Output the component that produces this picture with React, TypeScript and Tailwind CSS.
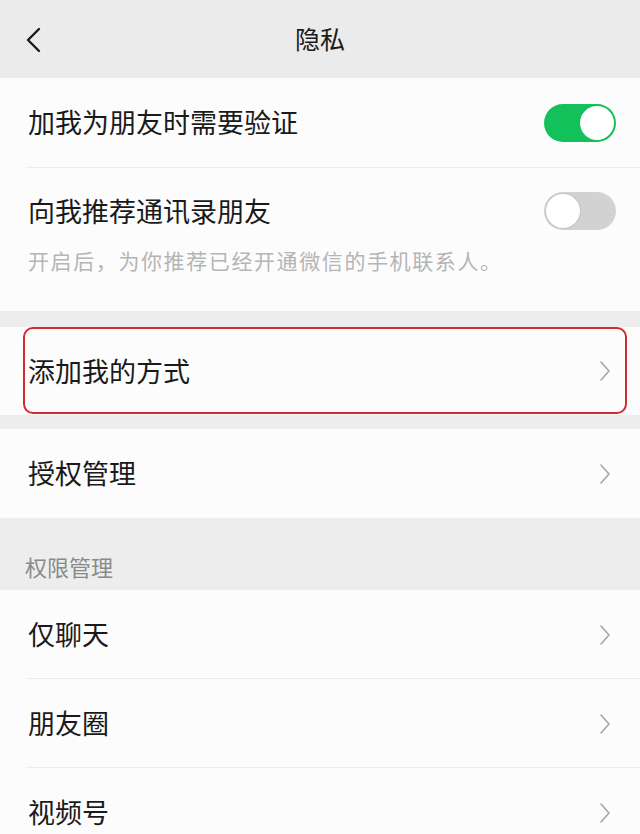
import React from "react";

const font = { fontFamily: '"Noto Sans CJK SC", "Noto Sans", sans-serif' };

const Chevron = () => (
  <svg width="14" height="22" viewBox="0 0 14 22" fill="none">
    <path d="M3 2 L11 11 L3 20" stroke="#a6a6a6" strokeWidth="1.6" strokeLinecap="round" strokeLinejoin="round" />
  </svg>
);

const Toggle = ({ on }: { on: boolean }) => (
  <div
    className={`w-[72px] h-[38px] rounded-full flex items-center p-[2px] ${on ? "bg-[#13c15b] justify-end" : "bg-[#d2d2d2] justify-start"}`}
  >
    <div className={`w-[34px] h-[34px] rounded-full bg-white ${on ? "" : "shadow-[0_0_0_1px_#c4c4c4]"}`}></div>
  </div>
);

const LinkRow = ({ label, divider }: { label: string; divider?: boolean }) => (
  <div className="relative flex items-center justify-between h-[89px] pl-[28px] pr-[28px] bg-[#fcfcfc]">
    <span className="text-[27px] text-[#1a1a1a]">{label}</span>
    <Chevron />
    {divider && <div className="absolute bottom-0 left-[26px] right-0 h-px bg-[#ececec]"></div>}
  </div>
);

export default function App() {
  return (
    <div className="w-[640px] h-[834px] overflow-hidden bg-[#ededed]" style={font}>
      {/* header */}
      <div className="relative h-[78px] flex items-center justify-center bg-[#ebebeb]">
        <svg className="absolute left-[24px] top-[27px]" width="18" height="26" viewBox="0 0 18 26" fill="none">
          <path d="M15 2 L4 13 L15 24" stroke="#1a1a1a" strokeWidth="2.4" strokeLinecap="round" strokeLinejoin="round" />
        </svg>
        <h1 className="text-[25px] text-[#1a1a1a]">隐私</h1>
      </div>

      {/* toggles */}
      <div className="bg-[#fcfcfc] h-[233px]">
        <div className="flex items-center justify-between h-[89px] pl-[28px] pr-[24px]">
          <span className="text-[27px] text-[#1a1a1a]">加我为朋友时需要验证</span>
          <Toggle on />
        </div>
        <div className="ml-[26px] h-px bg-[#ececec]"></div>
        <div className="flex items-center justify-between pl-[28px] pr-[24px] pt-[24px]">
          <span className="text-[27px] text-[#1a1a1a] leading-[36px]">向我推荐通讯录朋友</span>
          <Toggle on={false} />
        </div>
        <p className="pl-[28px] mt-[15px] text-[21px] text-[#b5b5b5] tracking-[1.6px]">开启后，为你推荐已经开通微信的手机联系人。</p>
      </div>

      <div className="h-[16px]"></div>

      {/* highlighted row */}
      <div className="relative flex items-center justify-between h-[88px] pl-[28px] pr-[28px] bg-[#fcfcfc]">
        <span className="text-[27px] text-[#1a1a1a]">添加我的方式</span>
        <Chevron />
        <div className="absolute left-[23px] right-[13px] top-0 bottom-[1px] border-2 border-[#d42a2f] rounded-[10px]"></div>
      </div>

      <div className="h-[14px]"></div>

      <LinkRow label="授权管理" />

      <div className="h-[72px] flex items-center pl-[25px] pt-[24px]">
        <span className="text-[22px] text-[#8a8a8a]">权限管理</span>
      </div>

      <LinkRow label="仅聊天" divider />
      <LinkRow label="朋友圈" divider />
      <LinkRow label="视频号" />
    </div>
  );
}
